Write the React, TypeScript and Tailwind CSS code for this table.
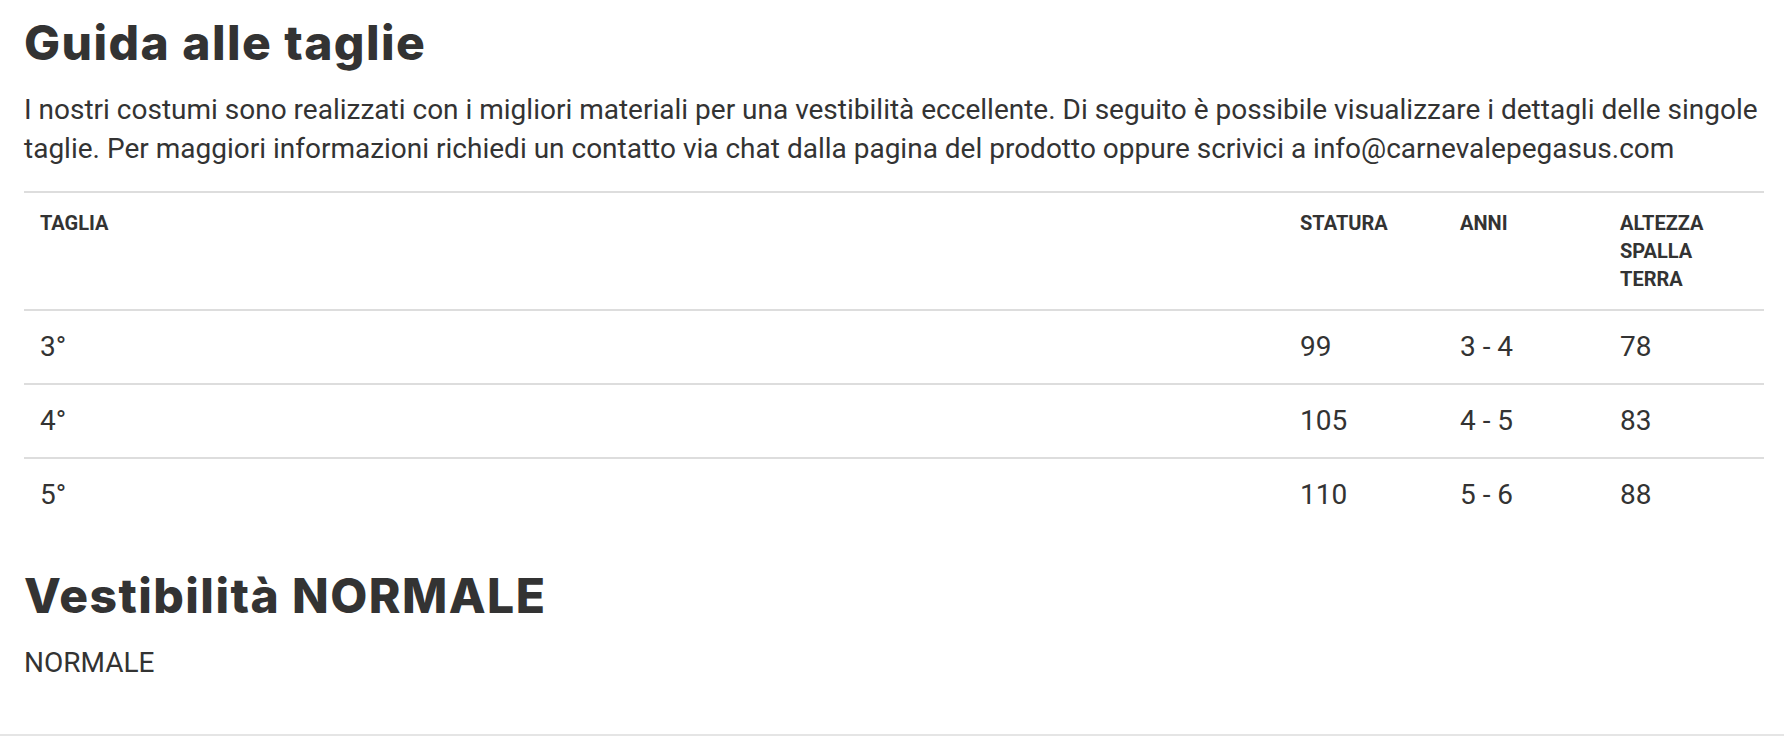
const rows = [
  { taglia: '3°', statura: '99', anni: '3 - 4', altezza: '78' },
  { taglia: '4°', statura: '105', anni: '4 - 5', altezza: '83' },
  { taglia: '5°', statura: '110', anni: '5 - 6', altezza: '88' },
];

const body = "font-['Roboto',sans-serif]";
const heading = "font-['Inter',sans-serif] font-extrabold text-[48px] leading-[57.6px] tracking-[0.03em] text-[#333333]";

export default function App() {
  return (
    <div className={`min-h-[739px] bg-white text-[#333333] ${body}`}>
      <div className="border-b-2 border-[#e5e5e5] px-6 pt-[14px] pb-[52px]">
        <h1 className={heading}>Guida alle taglie</h1>

        <p className="mt-[18px] whitespace-nowrap text-[28px] leading-[39.2px]">
          I nostri costumi sono realizzati con i migliori materiali per una vestibilità eccellente. Di seguito è
          possibile visualizzare i dettagli delle singole
          <br />
          taglie. Per maggiori informazioni richiedi un contatto via chat dalla pagina del prodotto oppure scrivici a
          info@carnevalepegasus.com
        </p>

        <table className="mt-[23px] w-[1740px] table-fixed border-collapse text-left">
          <colgroup>
            <col />
            <col className="w-[160px]" />
            <col className="w-[160px]" />
            <col className="w-[160px]" />
          </colgroup>
          <thead>
            <tr className="border-t-2 border-[#dddddd] align-top text-[20px] font-bold uppercase leading-[28px]">
              <th className="p-4 font-bold">Taglia</th>
              <th className="p-4 font-bold">Statura</th>
              <th className="p-4 font-bold">Anni</th>
              <th className="p-4 font-bold">Altezza spalla terra</th>
            </tr>
          </thead>
          <tbody>
            {rows.map((r) => (
              <tr key={r.taglia} className="border-t-2 border-[#dddddd] text-[28px] leading-[40px]">
                <td className="p-4">{r.taglia}</td>
                <td className="p-4">{r.statura}</td>
                <td className="p-4">{r.anni}</td>
                <td className="p-4">{r.altezza}</td>
              </tr>
            ))}
          </tbody>
        </table>

        <h2 className={`mt-9 ${heading}`}>Vestibilità NORMALE</h2>
        <p className="mt-[18px] text-[28px] leading-[39.2px]">NORMALE</p>
      </div>
    </div>
  );
}
